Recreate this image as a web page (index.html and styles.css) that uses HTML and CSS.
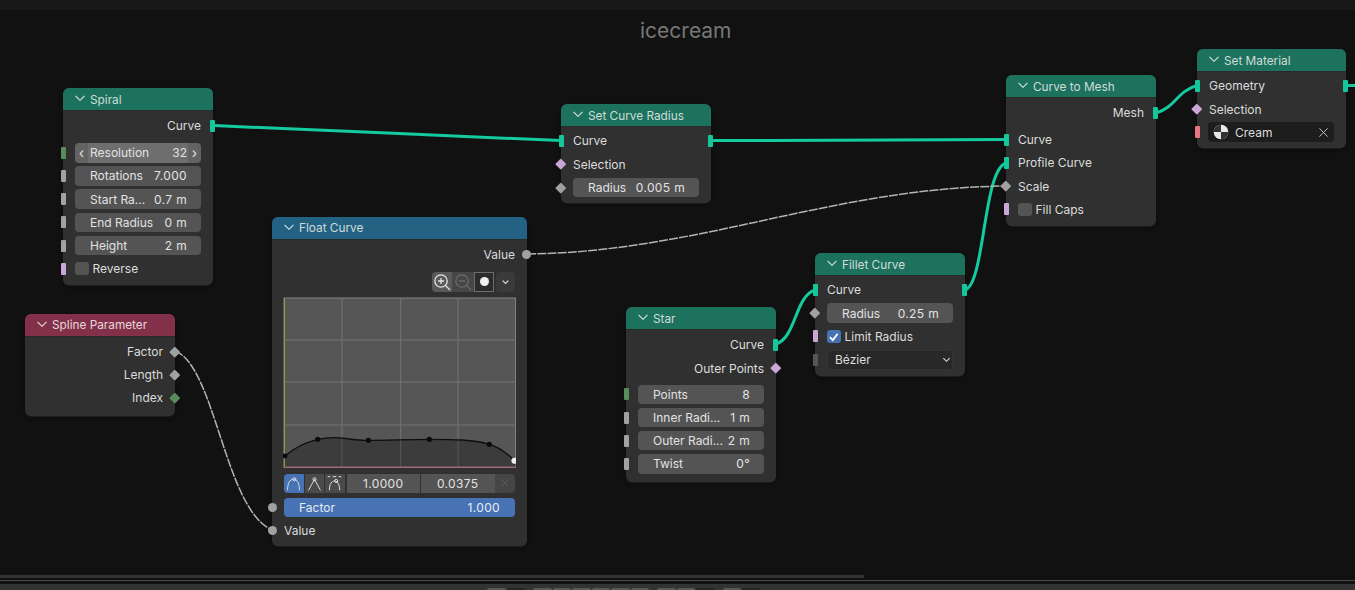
FILE: index.html
```html
<!DOCTYPE html>
<html lang="en">
<head>
<meta charset="utf-8">
<title>icecream</title>
<link rel="stylesheet" href="styles.css">
</head>
<body>
<div class="app">
  <div class="topstrip"></div>
  <main class="canvas">
    <svg class="links" viewBox="0 10 1355 570" width="1355" height="570" aria-hidden="true">
      <path class="link-geo" d="M214 125.6 C 330 130.6, 445 135.6, 561 140.6"/>
      <path class="link-geo" d="M711 140.6 C 810 140.3, 910 139.8, 1006 139.6"/>
      <path class="link-geo" d="M965 290 C 985 284, 983 170, 1006 163"/>
      <path class="link-geo" d="M776 344 C 796 338, 795 296, 815 290"/>
      <path class="link-geo" d="M1156 113 C 1176 107, 1177 91, 1197 85.5"/>
      <path class="link-geo" d="M1345 85.5 L1355 85.5"/>
      <path class="link-field" d="M527 254 C 700 252, 830 188, 1006 186"/>
      <path class="link-field" d="M175 351 C 215 365, 225 510, 272 530"/>
    </svg>
    <h1 class="title">icecream</h1>

    <section class="node n-spiral">
      <header class="head geo-head"><svg class="fold" viewBox="0 0 10 6"><path d="M.5 .8l4.5 4.5 4.5-4.5"/></svg><span>Spiral</span></header>
      <div class="body">
        <div class="row out gapbelow-s"><span>Curve</span><i class="sock sq geo right"></i></div>
        <div class="row"><i class="sock sq int left"></i><div class="num hover"><b class="arrow">‹</b><span class="mid"><span>Resolution</span><span>32</span></span><b class="arrow">›</b></div></div>
        <div class="row"><i class="sock sq flt left"></i><div class="num"><span>Rotations</span><span>7.000</span></div></div>
        <div class="row"><i class="sock sq flt left"></i><div class="num"><span>Start Ra...</span><span>0.7 m</span></div></div>
        <div class="row"><i class="sock sq flt left"></i><div class="num"><span>End Radius</span><span>0 m</span></div></div>
        <div class="row"><i class="sock sq flt left"></i><div class="num"><span>Height</span><span>2 m</span></div></div>
        <div class="row"><i class="sock sq bool left"></i><span class="check"></span><span>Reverse</span></div>
      </div>
    </section>

    <section class="node n-spline">
      <header class="head attr-head"><svg class="fold" viewBox="0 0 10 6"><path d="M.5 .8l4.5 4.5 4.5-4.5"/></svg><span>Spline Parameter</span></header>
      <div class="body">
        <div class="row out"><span>Factor</span><i class="sock dia flt right"></i></div>
        <div class="row out"><span>Length</span><i class="sock dia flt right"></i></div>
        <div class="row out"><span>Index</span><i class="sock dia int right"></i></div>
      </div>
    </section>

    <section class="node n-float">
      <header class="head conv-head"><svg class="fold" viewBox="0 0 10 6"><path d="M.5 .8l4.5 4.5 4.5-4.5"/></svg><span>Float Curve</span></header>
      <div class="body">
        <div class="row out"><span>Value</span><i class="sock dot flt right"></i></div>
        <div class="toolbar">
          <span class="tool t-on"><svg viewBox="0 0 20 20"><circle cx="9" cy="9" r="6.2"/><path d="M13.5 13.5l4.5 4.5M9 6v6M6 9h6"/></svg></span>
          <span class="tool t-dim"><svg viewBox="0 0 20 20"><circle cx="9" cy="9" r="6.2"/><path d="M13.5 13.5l4.5 4.5M6 9h6"/></svg></span>
          <span class="tool t-clip"><i class="clip-dot"></i></span>
          <span class="tool t-more"><svg viewBox="0 0 20 20"><path d="M7 8.5l3 3 3-3"/></svg></span>
        </div>
        <div class="curve">
          <svg viewBox="0 0 233 171" width="233" height="171">
            <rect class="c-bg" x="1" y="1" width="231.5" height="169.5"/>
            <path class="c-grid" d="M59 1V170M117.7 1V170M175 1V170M1 43H232.5M1 85H232.5M1 128H232.5"/>
            <path class="c-fill" d="M2 159 C 12 150, 24 145, 34.7 142.3 C 50 139, 62 141, 70 142.5 C 76 143.5, 80 143.3, 85.3 143.3 C 105 143.3, 125 142.3, 146.3 142.3 C 170 142.3, 190 142.5, 206.3 147.3 C 216 150, 225 157, 232.5 164.5 V170 H2 Z"/>
            <path class="c-grid2" d="M59 142V170M117.7 142V170M175 142V170"/>
            <path class="c-yaxis" d="M1.5 1V170"/>
            <path class="c-xaxis" d="M1 170H232.5"/>
            <path class="c-line" d="M2 159 C 12 150, 24 145, 34.7 142.3 C 50 139, 62 141, 70 142.5 C 76 143.5, 80 143.3, 85.3 143.3 C 105 143.3, 125 142.3, 146.3 142.3 C 170 142.3, 190 142.5, 206.3 147.3 C 216 150, 225 157, 232 164"/>
            <g class="c-pts"><circle cx="2" cy="159" r="2.4"/><circle cx="34.7" cy="142.3" r="2.6"/><circle cx="85.3" cy="143.3" r="2.6"/><circle cx="146.3" cy="142.3" r="2.6"/><circle cx="206.3" cy="147.3" r="2.6"/></g>
            <circle class="c-sel" cx="231.4" cy="163.7" r="3"/>
          </svg>
        </div>
        <div class="controls">
          <span class="hbtn active"><svg viewBox="0 0 20 20"><path d="M3 18C3 9 6 5 10 5s7 4 7 13"/><circle cx="11" cy="5" r="1.8"/></svg></span>
          <span class="hbtn"><svg viewBox="0 0 20 20"><path d="M3 18L10 5l7 13"/><circle cx="10" cy="5" r="1.8"/></svg></span>
          <span class="hbtn"><svg viewBox="0 0 20 20"><path d="M2 2h3M8 2h4M15 2h3M4 18C4 10 7 7 10 7s6 3 6 11"/><circle cx="12" cy="7" r="1.8"/></svg></span>
          <span class="cval">1.0000</span>
          <span class="cval">0.0375</span>
          <span class="cdel"><svg viewBox="0 0 12 12"><path d="M2 2l8 8M10 2l-8 8"/></svg></span>
        </div>
        <div class="factor"><i class="sock dot flt left"></i><span>Factor</span><span>1.000</span></div>
        <div class="row last"><i class="sock dot flt left"></i><span>Value</span></div>
      </div>
    </section>

    <section class="node n-radius">
      <header class="head geo-head"><svg class="fold" viewBox="0 0 10 6"><path d="M.5 .8l4.5 4.5 4.5-4.5"/></svg><span>Set Curve Radius</span></header>
      <div class="body">
        <div class="row split"><i class="sock sq geo left"></i><span>Curve</span><i class="sock sq geo right"></i></div>
        <div class="row"><i class="sock dia bool left"></i><span>Selection</span></div>
        <div class="row"><i class="sock dia flt left"></i><div class="num"><span>Radius</span><span>0.005 m</span></div></div>
      </div>
    </section>

    <section class="node n-star">
      <header class="head geo-head"><svg class="fold" viewBox="0 0 10 6"><path d="M.5 .8l4.5 4.5 4.5-4.5"/></svg><span>Star</span></header>
      <div class="body">
        <div class="row out"><span>Curve</span><i class="sock sq geo right"></i></div>
        <div class="row out gapbelow"><span>Outer Points</span><i class="sock dia bool right"></i></div>
        <div class="row"><i class="sock sq int left"></i><div class="num"><span>Points</span><span>8</span></div></div>
        <div class="row"><i class="sock sq flt left"></i><div class="num"><span>Inner Radi...</span><span>1 m</span></div></div>
        <div class="row"><i class="sock sq flt left"></i><div class="num"><span>Outer Radi...</span><span>2 m</span></div></div>
        <div class="row"><i class="sock sq flt left"></i><div class="num"><span>Twist</span><span>0°</span></div></div>
      </div>
    </section>

    <section class="node n-fillet">
      <header class="head geo-head"><svg class="fold" viewBox="0 0 10 6"><path d="M.5 .8l4.5 4.5 4.5-4.5"/></svg><span>Fillet Curve</span></header>
      <div class="body">
        <div class="row"><i class="sock sq geo left"></i><span>Curve</span><i class="sock sq geo right"></i></div>
        <div class="row"><i class="sock dia flt left"></i><div class="num"><span>Radius</span><span>0.25 m</span></div></div>
        <div class="row"><i class="sock sq bool left"></i><span class="check on"><svg viewBox="0 0 14 14"><path d="M3 7.5l3 3 5-6.5"/></svg></span><span>Limit Radius</span></div>
        <div class="row"><i class="sock sq off left"></i><div class="select"><span>Bézier</span><svg viewBox="0 0 10 6"><path d="M1.5 1l3.5 3.5L8.5 1"/></svg></div></div>
      </div>
    </section>

    <section class="node n-mesh">
      <header class="head geo-head"><svg class="fold" viewBox="0 0 10 6"><path d="M.5 .8l4.5 4.5 4.5-4.5"/></svg><span>Curve to Mesh</span></header>
      <div class="body">
        <div class="row out gapbelow-s"><span>Mesh</span><i class="sock sq geo right"></i></div>
        <div class="row"><i class="sock sq geo left"></i><span>Curve</span></div>
        <div class="row"><i class="sock sq geo left"></i><span>Profile Curve</span></div>
        <div class="row"><i class="sock dia flt left"></i><span>Scale</span></div>
        <div class="row"><i class="sock sq bool left"></i><span class="check"></span><span>Fill Caps</span></div>
      </div>
    </section>

    <section class="node n-material">
      <header class="head geo-head"><svg class="fold" viewBox="0 0 10 6"><path d="M.5 .8l4.5 4.5 4.5-4.5"/></svg><span>Set Material</span></header>
      <div class="body">
        <div class="row"><i class="sock sq geo left"></i><span>Geometry</span><i class="sock sq geo right"></i></div>
        <div class="row"><i class="sock dia bool left"></i><span>Selection</span></div>
        <div class="row"><i class="sock sq mat left"></i>
          <div class="matfield">
            <svg class="ball" viewBox="0 0 16 16"><circle class="ball-w" cx="8" cy="8" r="7.3"/><path class="ball-d" d="M8 .7A7.3 7.3 0 0 0 .7 8H8zM8 8h7.3A7.3 7.3 0 0 1 8 15.3z"/></svg>
            <span>Cream</span>
            <svg class="matx" viewBox="0 0 12 12"><path d="M1.5 1.5l9 9M10.5 1.5l-9 9"/></svg>
          </div>
        </div>
      </div>
    </section>

    <div class="hscroll"></div>
  </main>
  <div class="divider"></div>
  <footer class="statusbar">
    <div class="tools"><span class="b"></span><span class="b d"></span></div>
    <div class="tools"><span class="b"></span><span class="b"></span><span class="b"></span><span class="b"></span><span class="b"></span><span class="b"></span></div>
    <div class="tools"><span class="b"></span><span class="b"></span><span class="b d"></span></div>
    <div class="tools"><span class="b"></span><span class="b d"></span></div>
  </footer>
</div>
</body>
</html>
```

FILE: styles.css
```css
* { box-sizing: border-box; }
html, body { margin: 0; padding: 0; }
body {
  width: 1355px;
  height: 590px;
  overflow: hidden;
  background: #111;
  font-family: Inter, "Noto Sans", sans-serif;
  font-size: 12px;
  color: #dcdcdc;
}
.app { display: flex; flex-direction: column; height: 590px; }
.topstrip { height: 10px; background: #181818; flex: none; }
.canvas { position: relative; height: 570px; flex: none; background: #111; overflow: hidden; }
.links { position: absolute; left: 0; top: 0; }
.links path { fill: none; }
.link-geo { stroke: #14cb9f; stroke-width: 3; }
.link-field { stroke: #b4b4b4; stroke-width: 1.5; stroke-dasharray: 9 1.2; }
.title {
  position: absolute;
  left: 640px;
  top: 8px;
  margin: 0;
  font-size: 21px;
  line-height: 26px;
  font-weight: 400;
  color: #777;
}

/* nodes on the free canvas */
.node {
  position: absolute;
  width: 150px;
  background: #303030;
  border-radius: 6px;
  box-shadow: 0 1px 0 #1c1c1c, 0 2px 4px rgba(0,0,0,.3);
}
.n-spiral { left: 63px; top: 78px; }
.n-spline { left: 25px; top: 304px; }
.n-float { left: 272px; top: 207px; width: 255px; }
.n-radius { left: 561px; top: 94px; }
.n-star { left: 626px; top: 297px; }
.n-fillet { left: 815px; top: 243px; }
.n-mesh { left: 1006px; top: 65px; }
.n-material { left: 1197px; top: 39px; width: 149px; }

.head {
  height: 22px;
  display: flex;
  align-items: center;
  padding-left: 12px;
  border-radius: 6px 6px 0 0;
  color: #cfdcd7;
  box-shadow: 0 1px 0 #2a2a2a;
  font-size: 11.8px;
}
.head span { margin-left: 5px; line-height: 22px; }
.geo-head span { padding-top: 2px; }
.fold { width: 10px; height: 6px; margin-top: -3px; flex: none; }
.fold path { fill: none; stroke: #d8e4df; stroke-width: 1.1; }
.geo-head { background: #1d725e; }
.conv-head { background: #246283; }
.attr-head { background: #83314a; color: #e6d6db; }

.body { padding: 4px 0 9px; }
.row {
  position: relative;
  height: 23.2px;
  display: flex;
  align-items: center;
  padding: 0 12px;
  color: #dcdcdc;
}
.n-radius .row, .n-material .row, .n-fillet .row { height: 23.4px; }
.row.out { justify-content: flex-end; }
.row.last { height: 23px; margin-top: 2px; }
.gapbelow { margin-bottom: 3px; }
.gapbelow-s { margin-bottom: 4px; }
.n-spiral .body { padding-bottom: 4.6px; }
.n-float .body { padding: 3.5px 0 4.5px; }
.n-spline .body { padding-bottom: 6px; }
.n-radius .body, .n-material .body { padding: 3px 0 3.4px; }
.n-fillet .body { padding: 3px 0 4.2px; }
.n-mesh .body { padding: 4px 0 5px; }
.n-star .body { padding: 4.4px 0 6px; }

/* sockets sit across the node edge */
.sock { position: absolute; top: 50%; display: block; }
.sq { width: 5px; height: 12px; margin-top: -6px; border-radius: 1px; }
.dia { width: 7.5px; height: 7.5px; margin-top: -3.75px; transform: rotate(45deg); border-radius: 1px; }
.dot { width: 9px; height: 9px; margin-top: -4.5px; border-radius: 50%; }
.sq.left { left: -2px; }
.sq.right { right: -2px; }
.dia.left { left: -3.75px; }
.dia.right { right: -3.75px; }
.dot.left { left: -4.5px; }
.dot.right { right: -4px; }
.geo { background: #13c79b; }
.int { background: #598c5c; }
.flt { background: #a1a1a1; }
.bool { background: #cca6d6; }
.mat { background: #eb7582; }
.off { background: #565656; }

.num {
  flex: 1;
  height: 19.5px;
  display: flex;
  justify-content: space-between;
  align-items: center;
  padding: 0 14px 0 15px;
  background: #545454;
  border-radius: 4px;
  color: #e2e2e2;
  white-space: nowrap;
}
.num > span:last-child { letter-spacing: .35px; }
.num.hover { padding: 0; background: #636363; }
.mid {
  flex: 1;
  align-self: stretch;
  display: flex;
  justify-content: space-between;
  align-items: center;
  background: #6e6e6e;
  padding: 0 1px 0 2px;
}
.arrow { width: 13px; text-align: center; font-weight: 400; font-size: 14px; line-height: 18px; flex: none; }

.check {
  width: 13.5px;
  height: 13.5px;
  margin-right: 4px;
  background: #545454;
  border-radius: 3px;
  flex: none;
}
.check.on { background: #4772b3; }
.check svg { display: block; width: 13.5px; height: 13.5px; }
.check path { fill: none; stroke: #fff; stroke-width: 1.8; }

.select {
  flex: 1;
  height: 20px;
  display: flex;
  align-items: center;
  justify-content: space-between;
  padding: 0 2px 0 8px;
  background: #282828;
  box-shadow: inset 0 0 0 1px #343434;
  border-radius: 4px;
}
.select svg { width: 9px; height: 6px; }
.select path { fill: none; stroke: #dcdcdc; stroke-width: 1.2; }

.matfield {
  flex: 1;
  height: 20px;
  margin-left: -1px;
  display: flex;
  align-items: center;
  padding: 0 5px;
  background: #1d1d1d;
  border-radius: 4px;
}
.ball { width: 16px; height: 16px; flex: none; margin-right: 6px; }
.ball-w { fill: #e8e8e8; }
.ball-d { fill: #333; }
.matx { width: 11px; height: 11px; margin-left: auto; }
.matx path { fill: none; stroke: #c8c8c8; stroke-width: 1; }

/* float curve widget */
.toolbar { display: flex; justify-content: flex-end; height: 20px; margin: 6.3px 12px 0 0; }
.tool { width: 20px; height: 20px; display: flex; align-items: center; justify-content: center; }
.tool svg { width: 20px; height: 20px; }
.tool svg * { fill: none; stroke-width: 1.3; }
.t-on { background: #5a5a5a; border-radius: 4px 0 0 4px; }
.t-on svg * { stroke: #e4e4e4; }
.t-dim { background: #464646; width: 22px; }
.t-dim svg * { stroke: #6a6a6a; }
.t-clip { background: #2b2b2b; box-shadow: inset 0 0 0 1px #6c6c6c; }
.clip-dot { width: 9px; height: 9px; border-radius: 50%; background: #f0f0f0; }
.t-more { background: #3a3a3a; margin-left: 2px; border-radius: 4px; width: 19px; }
.t-more svg * { stroke: #dcdcdc; }
.curve { height: 171px; margin: 5px 0 0 11px; width: 233px; }
.curve svg { display: block; }
.c-bg { fill: #565656; stroke: #828282; stroke-width: 1; }
.c-grid { fill: none; stroke: #747474; stroke-width: 1; }
.c-grid2 { fill: none; stroke: #585858; stroke-width: 1; }
.c-fill { fill: #3c3c3c; }
.c-yaxis { fill: none; stroke: #8f9b3e; stroke-width: 1; }
.c-xaxis { fill: none; stroke: #a85f6c; stroke-width: 1; }
.c-line { fill: none; stroke: #0e0e0e; stroke-width: 1.3; }
.c-pts circle { fill: #0a0a0a; }
.c-sel { fill: #f0f0f0; }

.controls { display: flex; height: 19px; margin: 6px 12px 0; align-items: stretch; }
.hbtn {
  width: 19.5px;
  margin-right: 1px;
  background: #4a4a4a;
  display: flex;
  align-items: center;
  justify-content: center;
}
.hbtn.active { background: #4772b3; border-radius: 4px 0 0 4px; }
.hbtn svg { width: 17px; height: 17px; }
.hbtn svg * { fill: none; stroke: #e4e4e4; stroke-width: 1.1; }
.cval {
  width: 73.5px;
  margin-left: 1px;
  background: #545454;
  text-align: center;
  line-height: 19px;
  color: #e2e2e2;
  letter-spacing: .35px;
}
.cdel {
  flex: 1;
  background: #454545;
  border-radius: 0 4px 4px 0;
  display: flex;
  align-items: center;
  justify-content: center;
}
.cdel svg { width: 10px; height: 10px; }
.cdel path { fill: none; stroke: #5e5e5e; stroke-width: 1.1; }
.factor {
  position: relative;
  height: 19px;
  margin: 5px 12px 0;
  padding: 0 15px;
  display: flex;
  align-items: center;
  justify-content: space-between;
  background: #4772b3;
  border-radius: 4px;
  color: #e8edf5;
}
.factor > span:last-child { letter-spacing: .35px; }
.factor .sock.left { left: -16.5px; }

.hscroll {
  position: absolute;
  left: 0;
  bottom: 2px;
  width: 864px;
  height: 3.5px;
  background: #333;
}
.divider { height: 1px; background: #4a4a4a; flex: none; }
.statusbar {
  flex: 1;
  margin-top: 3px;
  background: #333;
  padding: 3.5px 0 0 487px;
  display: flex;
  gap: 8px;
}
.tools { display: flex; gap: 1px; }
.b { width: 18.5px; height: 3px; background: #585858; border-radius: 2px 2px 0 0; }
.b.d { background: #262626; }
```
